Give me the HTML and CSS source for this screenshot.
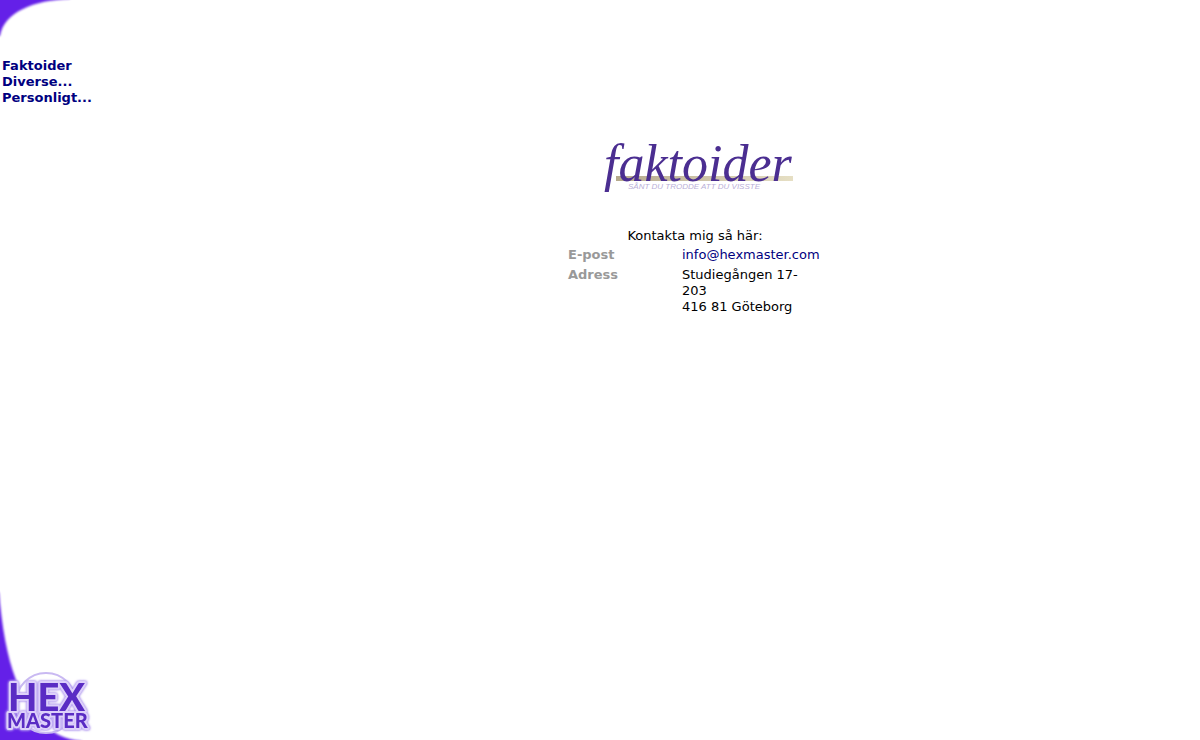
FILE: index.html
```html
<!DOCTYPE html>
<html lang="sv">
<head>
    <meta charset="UTF-8">
    <title>Faktoider - Kontakt</title>
    <link rel="stylesheet" href="styles.css">
</head>
<body>
    <div id="outer">
        <div id="left">
            <svg class="corner" width="80" height="40" viewBox="0 0 80 40" aria-hidden="true">
                <path d="M-5 -5H70V-1C34 0 4 12 0 36H-5Z"/>
            </svg>
            <nav id="menu">
                <a href="#">Faktoider</a>
                <a href="#">Diverse...</a>
                <a href="#">Personligt...</a>
            </nav>
            <svg class="hex" width="100" height="150" viewBox="0 0 100 150" role="img" aria-label="Hex Master">
                <path class="edge" d="M-5 2H-1C2 38 7 66 16 90C28 124 48 148 82 151V155H-5Z"/>
                <circle class="ring" cx="46" cy="113" r="30"/>
                <g class="letters">
                    <text class="big" x="8" y="121">HEX</text>
                    <text class="small" x="7" y="138">MASTER</text>
                </g>
            </svg>
        </div>

        <div id="content">
            <svg class="logo" width="200" height="64" viewBox="0 0 200 64" role="img" aria-label="Faktoider">
                <defs>
                    <linearGradient id="sand">
                        <stop offset="0" stop-color="#b5a98c"/>
                        <stop offset="1" stop-color="#e6dfc4"/>
                    </linearGradient>
                </defs>
                <rect x="21" y="40" width="177" height="5" fill="url(#sand)"/>
                <text class="name" x="9" y="45">faktoider</text>
                <text class="slogan" x="33" y="53">SÅNT DU TRODDE ATT DU VISSTE</text>
            </svg>
            <table>
                <caption>Kontakta mig så här:</caption>
                <tr>
                    <th>E-post</th>
                    <td><a href="mailto:info@hexmaster.com">info@hexmaster.com</a></td>
                </tr>
                <tr>
                    <th>Adress</th>
                    <td>Studiegången 17-203<br>416 81 Göteborg</td>
                </tr>
            </table>
        </div>
    </div>
</body>
</html>
```
FILE: styles.css
```css
*{
    padding: 0;
    margin: 0;
}

body{
    background: white;
    color: black;
    font: 13px/16px Verdana, "DejaVu Sans", sans-serif;
}

a{
    color: #000080;
    text-decoration: none;
}

#outer{
    display: flex;
    min-height: 100vh;
}

#left{
    display: flex;
    flex-direction: column;
    flex: none;
    width: 190px;
}

#left svg{
    display: block;
}

#menu{
    padding: 18px 2px;
    font-weight: bold;
}

#menu a{
    display: block;
}

/* mjuk kant mot det vita */
.corner path, .edge{
    fill: #6420e8;
    filter: blur(1px);
}

/* logotypen ligger alltid längst ner */
.hex{
    margin-top: auto;
}

.ring{
    fill: white;
    stroke: #c9b9f2;
    stroke-width: 2px;
}

.letters{
    fill: #5a2cc4;
    stroke: #ddd0fa;
    stroke-width: 4px;
    stroke-linejoin: round;
    paint-order: stroke;
    filter: drop-shadow(0 0 1px #a488ee) drop-shadow(0 0 1px #c9b9f2);
}

.big, .small{
    font-family: Lato, sans-serif;
    font-weight: 900;
}

.big{
    font-size: 38px;
}

.small{
    font-size: 20px;
}

#content{
    flex: 1;
    padding-top: 136px;
}

.logo{
    display: block;
    margin: 0 auto 28px;
}

.name{
    fill: #4b2e91;
    font: italic 52px "Liberation Serif", serif;
}

.slogan{
    fill: #b9afd8;
    font: italic 8px "Liberation Sans", sans-serif;
}

table{
    width: 258px;
    margin: 0 auto;
    table-layout: fixed;
    border-spacing: 2px;
}

th, td{
    padding: 1px 0;
    text-align: left;
    vertical-align: top;
}

th{
    width: 112px;
    color: #999999;
}
```
